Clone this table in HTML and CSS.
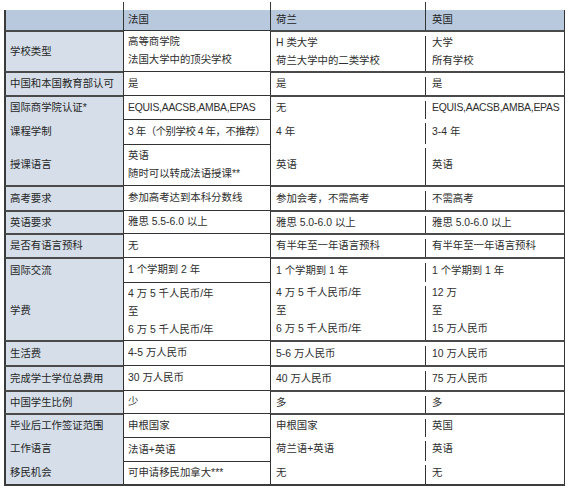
FILE: index.html
```html
<!DOCTYPE html>
<html lang="zh">
<head>
<meta charset="utf-8">
<title>法国 荷兰 英国 对比</title>
<link rel="stylesheet" href="styles.css">
</head>
<body>
<div class="table">
  <div class="c stub"></div><div class="c stub v"></div><div class="c stub v"></div><div class="c stub v"></div>

  <div class="c lab hd"></div><div class="c fr hd">法国</div><div class="c nl hd">荷兰</div><div class="c uk hd">英国</div>

  <div class="c lab t">学校类型</div>
  <div class="c fr t"><span>高等商学院</span><span>法国大学中的顶尖学校</span></div>
  <div class="c nl t"><span>H 类大学</span><span>荷兰大学中的二类学校</span></div>
  <div class="c uk t"><span>大学</span><span>所有学校</span></div>

  <div class="c lab t">中国和本国教育部认可</div><div class="c fr t">是</div><div class="c nl t">是</div><div class="c uk t">是</div>

  <div class="c lab t">国际商学院认证*</div><div class="c fr t eq">EQUIS,AACSB,AMBA,EPAS</div><div class="c nl t">无</div><div class="c uk t eq">EQUIS,AACSB,AMBA,EPAS</div>
  <div class="c lab">课程学制</div><div class="c fr t tight">3 年（个别学校 4 年，不推荐）</div><div class="c nl">4 年</div><div class="c uk">3-4 年</div>
  <div class="c lab">授课语言</div>
  <div class="c fr t"><span>英语</span><span>随时可以转成法语授课**</span></div>
  <div class="c nl">英语</div><div class="c uk">英语</div>

  <div class="c lab t">高考要求</div><div class="c fr t">参加高考达到本科分数线</div><div class="c nl t">参加会考，不需高考</div><div class="c uk t">不需高考</div>
  <div class="c lab t">英语要求</div><div class="c fr t">雅思 5.5-6.0 以上</div><div class="c nl t">雅思 5.0-6.0 以上</div><div class="c uk t">雅思 5.0-6.0 以上</div>
  <div class="c lab t">是否有语言预科</div><div class="c fr t">无</div><div class="c nl t">有半年至一年语言预科</div><div class="c uk t">有半年至一年语言预科</div>

  <div class="c lab t">国际交流</div><div class="c fr t">1 个学期到 2 年</div><div class="c nl t">1 个学期到 1 年</div><div class="c uk t">1 个学期到 1 年</div>
  <div class="c lab">学费</div>
  <div class="c fr t"><span>4 万 5 千人民币/年</span><span>至</span><span>6 万 5 千人民币/年</span></div>
  <div class="c nl"><span>4 万 5 千人民币/年</span><span>至</span><span>6 万 5 千人民币/年</span></div>
  <div class="c uk"><span>12 万</span><span>至</span><span>15 万人民币</span></div>

  <div class="c lab t">生活费</div><div class="c fr t">4-5 万人民币</div><div class="c nl t">5-6 万人民币</div><div class="c uk t">10 万人民币</div>
  <div class="c lab t">完成学士学位总费用</div><div class="c fr t">30 万人民币</div><div class="c nl t">40 万人民币</div><div class="c uk t">75 万人民币</div>
  <div class="c lab t">中国学生比例</div><div class="c fr t">少</div><div class="c nl t">多</div><div class="c uk t">多</div>

  <div class="c lab t">毕业后工作签证范围</div><div class="c fr t">申根国家</div><div class="c nl t">申根国家</div><div class="c uk t">英国</div>
  <div class="c lab">工作语言</div><div class="c fr t">法语+英语</div><div class="c nl">荷兰语+英语</div><div class="c uk">英语</div>
  <div class="c lab">移民机会</div><div class="c fr t">可申请移民加拿大***</div><div class="c nl">无</div><div class="c uk">无</div>
</div>
</body>
</html>
```

FILE: styles.css
```css
html, body {
  margin: 0;
  padding: 0;
  background: #ffffff;
}

body {
  font-family: "Liberation Sans", "Noto Sans CJK SC", sans-serif;
  font-size: 10.4px;
  color: #2e2e2e;
}

.table {
  display: grid;
  grid-template-columns: 119px 147px 155px 140px;
  grid-template-rows: 8px 20px 41px 24px 24px 25px 41px 25px 23px 24px 25px 58px 25px 25px 23px 24px 24px 23px;
  margin: 2px 0 0 4px;
  width: 561px;
  border-bottom: 2px solid #3c3c3c;
}

.c {
  box-sizing: border-box;
  display: flex;
  flex-direction: column;
  justify-content: center;
  line-height: 18px;
  white-space: nowrap;
  overflow: visible;
}

.stub {
  background: transparent;
}

.stub.v {
  border-left: 1px solid #3a3a3a;
}

.lab {
  background: #d5dee9;
  border-left: 2px solid #3a3a3a;
  padding-left: 4px;
  color: #262626;
}

.fr {
  border-left: 1px solid #333333;
  padding-left: 4px;
}

.nl {
  border-left: 1px solid #333333;
  padding-left: 5px;
}

.uk {
  border-right: 1px solid #333333;
  padding-left: 7px;
  background: linear-gradient(#333333, #333333) 0 4px / 1px calc(100% - 4px) no-repeat;
}

.hd {
  background-color: #b9c9dd;
  color: #222222;
}

.uk.hd {
  background: linear-gradient(#333333, #333333) 0 0 / 1px 100% no-repeat, #b9c9dd;
}

.t {
  border-top: 1px solid #333333;
}

.lab.t,
.nl.t,
.uk.t {
  border-top: 2px solid #4a4a4a;
}

.fr.t {
  border-top: 1px solid #333333;
}

.tight {
  letter-spacing: -0.45px;
}

.eq {
  letter-spacing: -0.25px;
}
```
